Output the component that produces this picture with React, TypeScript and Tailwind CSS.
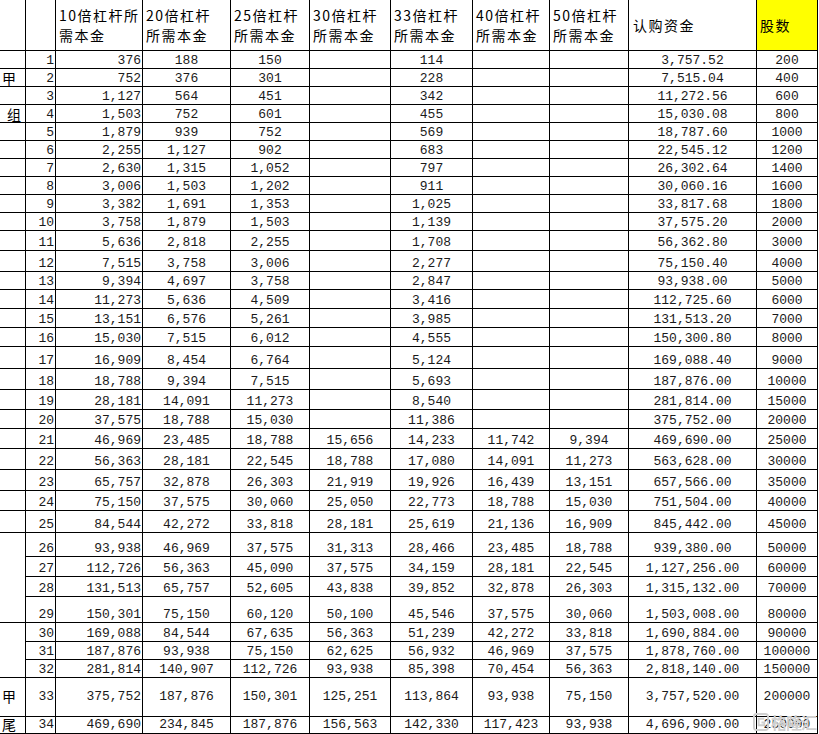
import React from 'react';

type Row = [string, string, string, string, string, string, string, string, string, string];

const rows: Row[] = [
    ['1', '376', '188', '150', '', '114', '', '', '3,757.52', '200'],
    ['2', '752', '376', '301', '', '228', '', '', '7,515.04', '400'],
    ['3', '1,127', '564', '451', '', '342', '', '', '11,272.56', '600'],
    ['4', '1,503', '752', '601', '', '455', '', '', '15,030.08', '800'],
    ['5', '1,879', '939', '752', '', '569', '', '', '18,787.60', '1000'],
    ['6', '2,255', '1,127', '902', '', '683', '', '', '22,545.12', '1200'],
    ['7', '2,630', '1,315', '1,052', '', '797', '', '', '26,302.64', '1400'],
    ['8', '3,006', '1,503', '1,202', '', '911', '', '', '30,060.16', '1600'],
    ['9', '3,382', '1,691', '1,353', '', '1,025', '', '', '33,817.68', '1800'],
    ['10', '3,758', '1,879', '1,503', '', '1,139', '', '', '37,575.20', '2000'],
    ['11', '5,636', '2,818', '2,255', '', '1,708', '', '', '56,362.80', '3000'],
    ['12', '7,515', '3,758', '3,006', '', '2,277', '', '', '75,150.40', '4000'],
    ['13', '9,394', '4,697', '3,758', '', '2,847', '', '', '93,938.00', '5000'],
    ['14', '11,273', '5,636', '4,509', '', '3,416', '', '', '112,725.60', '6000'],
    ['15', '13,151', '6,576', '5,261', '', '3,985', '', '', '131,513.20', '7000'],
    ['16', '15,030', '7,515', '6,012', '', '4,555', '', '', '150,300.80', '8000'],
    ['17', '16,909', '8,454', '6,764', '', '5,124', '', '', '169,088.40', '9000'],
    ['18', '18,788', '9,394', '7,515', '', '5,693', '', '', '187,876.00', '10000'],
    ['19', '28,181', '14,091', '11,273', '', '8,540', '', '', '281,814.00', '15000'],
    ['20', '37,575', '18,788', '15,030', '', '11,386', '', '', '375,752.00', '20000'],
    ['21', '46,969', '23,485', '18,788', '15,656', '14,233', '11,742', '9,394', '469,690.00', '25000'],
    ['22', '56,363', '28,181', '22,545', '18,788', '17,080', '14,091', '11,273', '563,628.00', '30000'],
    ['23', '65,757', '32,878', '26,303', '21,919', '19,926', '16,439', '13,151', '657,566.00', '35000'],
    ['24', '75,150', '37,575', '30,060', '25,050', '22,773', '18,788', '15,030', '751,504.00', '40000'],
    ['25', '84,544', '42,272', '33,818', '28,181', '25,619', '21,136', '16,909', '845,442.00', '45000'],
    ['26', '93,938', '46,969', '37,575', '31,313', '28,466', '23,485', '18,788', '939,380.00', '50000'],
    ['27', '112,726', '56,363', '45,090', '37,575', '34,159', '28,181', '22,545', '1,127,256.00', '60000'],
    ['28', '131,513', '65,757', '52,605', '43,838', '39,852', '32,878', '26,303', '1,315,132.00', '70000'],
    ['29', '150,301', '75,150', '60,120', '50,100', '45,546', '37,575', '30,060', '1,503,008.00', '80000'],
    ['30', '169,088', '84,544', '67,635', '56,363', '51,239', '42,272', '33,818', '1,690,884.00', '90000'],
    ['31', '187,876', '93,938', '75,150', '62,625', '56,932', '46,969', '37,575', '1,878,760.00', '100000'],
    ['32', '281,814', '140,907', '112,726', '93,938', '85,398', '70,454', '56,363', '2,818,140.00', '150000'],
    ['33', '375,752', '187,876', '150,301', '125,251', '113,864', '93,938', '75,150', '3,757,520.00', '200000'],
    ['34', '469,690', '234,845', '187,876', '156,563', '142,330', '117,423', '93,938', '4,696,900.00', '250000'],
];

// first column: label + how many rows it covers
const groupCol: Record<number, { text: string; span: number; indent?: boolean }> = {
    2: { text: '甲', span: 1 },
    4: { text: '组', span: 1, indent: true },
    26: { text: '', span: 4 },
    30: { text: '', span: 3 },
    33: { text: '甲', span: 1 },
    34: { text: '尾', span: 1 },
};
const covered = new Set([27, 28, 29, 31, 32]);

const headers: [string, string][] = [
    ['10倍杠杆所', '需本金'],
    ['20倍杠杆', '所需本金'],
    ['25倍杠杆', '所需本金'],
    ['30倍杠杆', '所需本金'],
    ['33倍杠杆', '所需本金'],
    ['40倍杠杆', '所需本金'],
    ['50倍杠杆', '所需本金'],
];

const cjk = "font-['Noto_Sans_CJK_SC',sans-serif]";
const num = "font-['Liberation_Mono',monospace] text-[13px] leading-none text-[#1a1a1a]";

const Logo = () => (
    <div className="absolute right-[3px] bottom-[3px] flex items-center gap-[2px] text-[#d0d0d0]">
        <svg width="16" height="18" viewBox="0 0 17 19" fill="none">
            <rect x="1" y="1" width="15" height="17" rx="3" stroke="#d0d0d0" strokeWidth="2" />
            <path d="M12 6H6v7h6v-3H9" stroke="#d0d0d0" strokeWidth="2" />
        </svg>
        <span className={`${cjk} text-[16px] font-bold leading-none tracking-[-1px]`}>格隆汇</span>
    </div>
);

export default function App() {
    return (
        <div className="relative w-[819px] h-[734px] bg-white overflow-hidden">
            <div className="grid grid-cols-[26px_30px_87px_88px_79px_81px_82px_77px_79px_128px_61px] grid-rows-[51px_repeat(10,18px)_20px_21px_18px_19px_19px_19px_22px_21px_20px_19px_20px_21px_21px_20px_22px_24px_20px_20px_26px_19px_18px_18px_39px_17px]">
                {/* header */}
                <div className="border-r border-b border-black" />
                <div className="border-r border-b border-black" />
                {headers.map(([a, b]) => (
                    <div key={a} className={`border-r border-b border-black flex flex-col justify-center pl-[3px] text-[14px] leading-[20px] tracking-[1.5px] text-black whitespace-nowrap ${cjk}`}>
                        <span>{a}</span>
                        <span>{b}</span>
                    </div>
                ))}
                <div className={`border-r border-b border-black flex items-center pl-[4px] text-[14px] tracking-[1.5px] text-black ${cjk}`}>认购资金</div>
                <div className={`border-r border-b border-black bg-[#ffff00] flex items-center pl-[3px] text-[14px] tracking-[1.5px] text-black ${cjk}`}>股数</div>

                {rows.map((r) => {
                    const i = Number(r[0]);
                    const g = groupCol[i];
                    const big = i >= 33;
                    const align = big ? 'items-center' : 'items-end';
                    return (
                        <React.Fragment key={i}>
                            {!covered.has(i) && (
                                <div
                                    className={`border-r border-b border-black flex ${align} text-[14px] leading-none ${cjk} ${
                                        g?.span === 4 ? 'row-span-4' : g?.span === 3 ? 'row-span-3' : ''
                                    } ${g?.indent ? 'pl-[7px]' : 'pl-[2px]'} ${big ? 'pb-[2px]' : 'pb-[1px]'}`}
                                >
                                    {g?.text}
                                </div>
                            )}
                            <div className={`border-r border-b border-black flex ${align} justify-end pr-[1px] pb-[1px] ${num}`}>{r[0]}</div>
                            <div className={`border-r border-b border-black flex ${align} justify-end pr-[1px] pb-[1px] ${num}`}>{r[1]}</div>
                            {r.slice(2).map((v, k) => (
                                <div key={k} className={`border-r border-b border-black flex ${align} justify-center pb-[1px] ${num}`}>
                                    {v}
                                </div>
                            ))}
                        </React.Fragment>
                    );
                })}
            </div>
            <Logo />
        </div>
    );
}
